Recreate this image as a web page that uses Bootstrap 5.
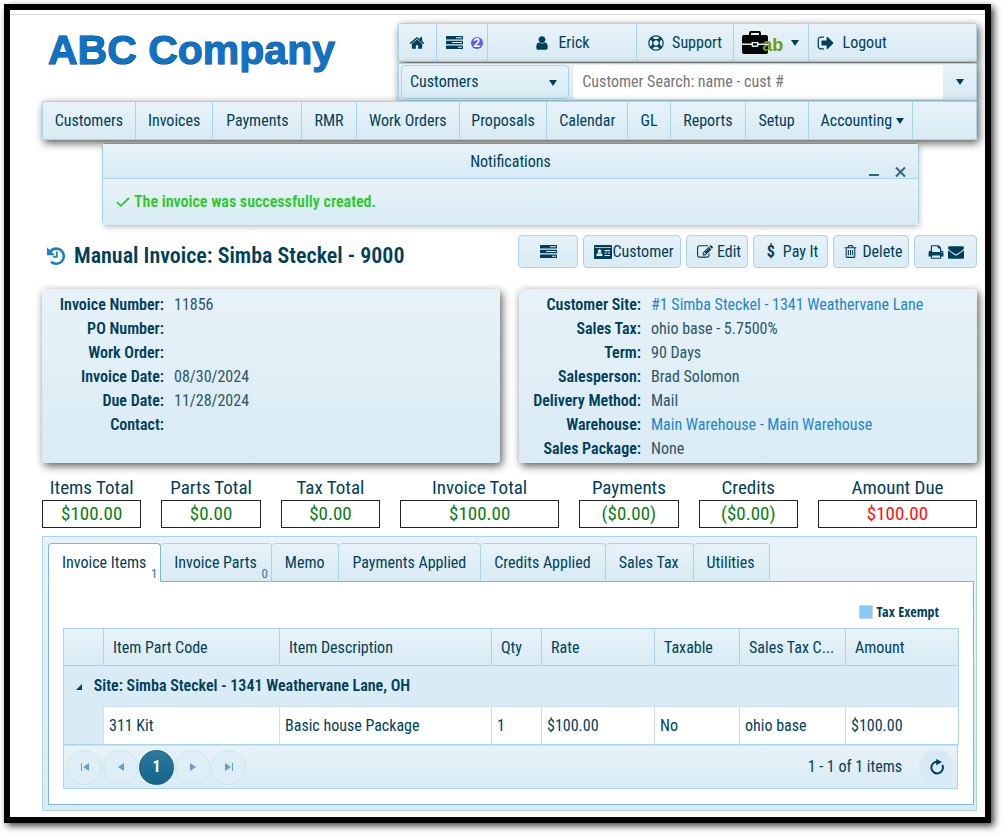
<!DOCTYPE html>
<html lang="en">
<head>
<meta charset="utf-8">
<meta name="viewport" content="width=device-width, initial-scale=1">
<title>Manual Invoice: Simba Steckel - 9000</title>
<link href="https://cdn.jsdelivr.net/npm/bootstrap@5.3.0/dist/css/bootstrap.min.css" rel="stylesheet">
<script src="https://cdn.jsdelivr.net/npm/bootstrap@5.3.0/dist/js/bootstrap.bundle.min.js"></script>
<style>
  :root { --ink:#003f59; --line:#a9d5e6; --line-dark:#7bb9d3; --pale:#e7f2f8; --mid:#d9ebf4; }
  body { font-family:"Roboto Condensed","Liberation Sans",sans-serif; font-size:16px; line-height:24px; color:var(--ink); }
  a { color:inherit; text-decoration:none; }
  svg { fill:currentColor; flex:none; }
  .frame { border:6px solid #000; box-shadow:3px 3px 7px rgba(0,0,0,.75); margin:4px 13px 12px 4px; }
  .page-body { border-top:1px solid #dcdcdc; padding:8px 8px 6px 32px; margin-top:4px; }
  .grad { background:linear-gradient(var(--pale),var(--mid)); }
  .lift { box-shadow:2px 3px 8px rgba(0,0,0,.65); }
  .bar { border:1px solid var(--line); border-radius:2px; }
  .head-grid { display:grid; grid-template-columns:minmax(0,356fr) minmax(0,579fr); }
  .logo { font:bold 41px/46px "Liberation Sans",sans-serif; color:#0b74ca; -webkit-text-stroke:1px #123a60; paint-order:stroke fill; margin:4px 0 0 6px; }
  .cells { display:grid; }
  .cells > * { display:flex; align-items:center; justify-content:center; gap:8px; color:var(--ink); white-space:nowrap; border-right:1px solid var(--line); }
  .cells > *:last-child { border-right:0; }
  .user-cells { height:39px; grid-template-columns:38fr 51fr 150fr 97fr 75fr 168fr; }
  .nav-cells { height:39px; grid-template-columns:93fr 78fr 89fr 55fr 103fr 88fr 81fr 43fr 75fr 63fr 105fr 63fr; }
  .count { background:#5a5cf5; color:#fff; border-radius:50%; font:bold 12px/12px "Roboto",sans-serif; width:12px; height:12px; text-align:center; }
  .ab { position:relative; color:#6f9c0b; font:bold 18px/18px "Liberation Sans",sans-serif; margin-left:-6px; }
  .search-row { display:grid; grid-template-columns:minmax(0,168fr) minmax(0,373fr) 33px; padding:1px 0 1px 2px; height:38px; margin-top:1px; }
  .search-row select { appearance:none; border:1px solid var(--line); border-radius:4px; color:var(--ink); padding:0 8px; width:100%; height:100%; }
  .search-row input { border:0; padding:0 9px; margin-left:4px; border-radius:4px 0 0 4px; color:var(--ink); min-width:0; }
  .search-row input::placeholder { color:#75767a; opacity:1; }
  .search-row button { border:0; color:var(--ink); padding:0; }
  .caret { width:0; height:0; border:4px solid transparent; border-top:6px solid var(--ink); border-bottom:0; flex:none; }
  .select-caret { position:absolute; right:12px; top:15px; pointer-events:none; }
  .notice { margin:3px 58px 0 60px; border-radius:4px; border:1px solid var(--line); box-shadow:1px 2px 5px rgba(0,0,0,.2); }
  .notice-head { height:35px; padding-top:6px; border-bottom:1px solid var(--line); text-align:center; position:relative; }
  .notice-tools { position:absolute; right:12px; bottom:0; }
  .notice-tools button { border:0; background:none; padding:0; display:block; height:12px; color:#33657b; }
  .notice-text { height:46px; padding:0 13px; color:#2bc92b; font-weight:600; }
  .title-row { margin:9px 0 17px; }
  .title-text { padding-top:5px; }
  h1 { font-size:22px; line-height:32px; font-weight:600; margin:0; }
  .tool { border:1px solid var(--line); border-radius:4px; color:var(--ink); height:33px; padding:0; display:flex; align-items:center; justify-content:center; box-shadow:inset 0 0 0 1px #dcedf5; }
  .tools { display:grid; gap:5px; grid-template-columns:60px 98px 62px 75px 76px 63px; }
  .info-grid { display:grid; grid-template-columns:minmax(0,1fr) minmax(0,1fr); gap:19px; margin-bottom:13px; }
  .info { border-radius:4px; height:174px; padding-top:4px; }
  .info dl { display:grid; grid-template-columns:122px 1fr; column-gap:10px; margin:0; }
  .info dt { text-align:right; font-weight:600; }
  .info dd { margin:0; color:#2c5568; }
  .info dd a { color:#1a86cc; }
  .totals { display:grid; grid-template-columns:5fr 5fr 5fr 8fr 5fr 5fr 8fr; gap:20px; text-align:center; font-size:19px; margin-bottom:8px; }
  .totals output { display:block; border:1px solid #222; background:#fff; color:#0b7d12; line-height:26px; }
  .totals label { display:block; line-height:24px; }
  .totals output.due { color:#f11; }
  .panel { border:1px solid var(--line); padding:6px 2px 5px 5px; background:linear-gradient(var(--pale),var(--mid)); }
  .tabs { height:39px; margin-bottom:-1px; position:relative; }
  .tabs button { border:1px solid var(--line); border-left-width:0; border-bottom-color:var(--line-dark); border-radius:4px 4px 0 0; color:var(--ink); padding:0 14px 0 13px; position:relative; white-space:nowrap; }
  .tabs button.active { background:#fff; border:1px solid var(--line-dark); border-bottom-color:#fff; }
  .tabs small { position:absolute; right:3px; bottom:0; font-size:13px; line-height:15px; color:#3a7692; }
  .pane { border:1px solid var(--line-dark); background:#fff; padding:18px 15px 15px 14px; }
  .legend-row { font:bold 14px/24px "Open Sans Condensed","Roboto Condensed",sans-serif; gap:4px; padding-right:19px; }
  .swatch { width:14px; height:14px; background:#88cbf8; border:1px solid #c8d2d8; }
  .items { table-layout:fixed; width:100%; border-collapse:collapse; border:1px solid var(--line); margin:4px 0 0; }
  .items th { height:37px; padding:2px 9px 0; font-weight:400; border-left:1px solid var(--line); border-bottom:1px solid var(--line); overflow:hidden; white-space:nowrap; }
  .items thead tr { background:linear-gradient(var(--pale),var(--mid)); }
  .items .site { height:41px; background:var(--mid); font-weight:600; padding:0 12px; border:0; }
  .items td { height:38px; padding:0 5px; border-left:1px solid #c9e3ee; border-top:1px solid #c9e3ee; }
  .items td.gutter { background:var(--mid); border:0; }
  .pager { border:1px solid var(--line); border-top-color:#c9e3ee; height:44px; padding:0 3px; gap:1px; }
  .pager button { width:35px; height:35px; border-radius:50%; border:1px solid #cde4ef; background:#deeef6; color:#6f9db1; padding:0; display:flex; align-items:center; justify-content:center; }
  .pager button.current { background:linear-gradient(#2c7a9b,#14658a); border-color:#156488; color:#fff; font-weight:700; }
  .pager button.reload { color:var(--ink); background:#d7eaf3; border:0; }
</style>
</head>
<body>
<svg width="0" height="0" class="position-absolute" aria-hidden="true">
  <symbol id="i-home" viewBox="0 0 1792 1792"><path d="M1472 992v480q0 26-19 45t-45 19h-384v-384h-256v384h-384q-26 0-45-19t-19-45v-480q0-1 .5-3t.5-3l575-474 575 474q1 2 1 6zm223-69l-62 74q-8 9-21 11h-3q-13 0-21-7l-692-577-692 577q-12 8-24 7-13-2-21-11l-62-74q-8-10-7-23.5t11-21.5l719-599q32-26 76-26t76 26l244 204v-195q0-14 9-23t23-9h192q14 0 23 9t9 23v408l219 182q10 8 11 21.5t-7 23.5z"/></symbol>
  <symbol id="i-user" viewBox="0 0 1792 1792"><path d="M1536 1399q0 109-62.5 187t-150.5 78h-854q-88 0-150.5-78t-62.5-187q0-85 8.5-160.5t31.5-152 58.5-131 94-89 134.5-34.5q131 128 313 128t313-128q76 0 134.500 34.500t94 89 58.500 131 31.500 152 8.500 160.500zm-256-887q0 159-112.500 271.500t-271.500 112.500-271.500-112.500-112.500-271.500 112.500-271.500 271.500-112.500 271.500 112.500 112.500 271.500z"/></symbol>
  <symbol id="i-tasks" viewBox="0 0 17 13"><path fill-rule="evenodd" d="M.5 0h16q.5 0 .5.500v2.500q0 .5-.5.500H.5Q0 3.500 0 3V.5Q0 0 .5 0zM10 1.200v1h6v-1zM.5 4.700h16q.5 0 .5.500v2.500q0 .5-.5.500H.5Q0 8.200 0 7.700V5.200q0-.5.500-.5zM6 6v1h10V6zM.5 9.400h16q.5 0 .5.500v2.500q0 .5-.5.500H.5q-.5 0-.5-.5V9.900q0-.5.500-.5zM12 10.700v1h4v-1z"/></symbol>
  <symbol id="i-ring" viewBox="0 0 16 16"><circle cx="8" cy="8" r="7.200" fill="none" stroke="currentColor" stroke-width="1.200"/><circle cx="8" cy="8" r="3.300" fill="none" stroke="currentColor" stroke-width="1.200"/><path d="M2.300 3.900L3.900 2.300 6.600 5 5 6.600zM12.100 2.300l1.600 1.600L11 6.600 9.400 5zM13.700 12.100l-1.600 1.600L9.400 11 11 9.400zM3.900 13.700l-1.600-1.600L5 9.400 6.600 11z" stroke="currentColor" stroke-width="1"/></symbol>
  <symbol id="i-out" viewBox="0 0 1792 1792"><path d="M704 1440q0 4 1 20t.5 26.500-3 23.500-10 19.500-20.500 6.500h-320q-119 0-203.500-84.500t-84.500-203.500v-704q0-119 84.500-203.500t203.500-84.500h320q13 0 22.500 9.500t9.500 22.500q0 4 1 20t.5 26.500-3 23.500-10 19.500-20.500 6.500h-320q-66 0-113 47t-47 113v704q0 66 47 113t113 47h312l11.500 1 11.500 3 8 5.500 7 9 2 13.500zm928-544q0 26-19 45l-544 544q-19 19-45 19t-45-19-19-45v-288h-448q-26 0-45-19t-19-45v-384q0-26 19-45t45-19h448v-288q0-26 19-45t45-19 45 19l544 544q19 19 19 45z"/></symbol>
  <symbol id="i-case" viewBox="0 0 26 23"><path fill-rule="evenodd" d="M7 4V2q0-2 2-2h8q2 0 2 2v2h5q2 0 2 2v6.500h-9.500V11h-7v1.500H0V6q0-2 2-2zM9 4h8V2H9zM0 14h9.500v.5q0 1.500 1.500 1.500h4q1.500 0 1.500-1.500V14H26v7q0 2-2 2H2q-2 0-2-2zM11 12.200h4v2.300h-4z"/></symbol>
  <symbol id="i-card" viewBox="0 0 18 14"><path fill-rule="evenodd" d="M1 0h16q1 0 1 1v12q0 1-1 1H1q-1 0-1-1V1q0-1 1-1zM1 2v.8h16V2zM5.500 4.300a1.700 2 0 1 0 .1 0zM2.500 11h6V9.500Q8 8.300 7 8 5.500 9 4 8q-1.300.3-1.500 1.500zM10.500 5v1.200H16V5zM10.500 7.500v1H13v-1zM14 7.500v1h2v-1zM10.500 10v1H16v-1z"/></symbol>
  <symbol id="i-edit" viewBox="0 0 1792 1792"><path d="M888 1184l116-116-152-152-116 116v56h96v96h56zm440-720q-16-16-33 1l-350 350q-17 17-1 33t33-1l350-350q17-17 1-33zm80 594v190q0 119-84.500 203.500t-203.500 84.500h-832q-119 0-203.500-84.500t-84.500-203.500v-832q0-119 84.500-203.500t203.500-84.500h832q63 0 117 25 15 7 18 23 3 17-9 29l-49 49q-14 14-32 8-23-6-45-6h-832q-66 0-113 47t-47 113v832q0 66 47 113t113 47h832q66 0 113-47t47-113v-126q0-13 9-22l64-64q15-15 35-7t20 29zm-96-738l288 288-672 672h-288v-288zm444 132l-92 92-288-288 92-92q28-28 68-28t68 28l152 152q28 28 28 68t-28 68z"/></symbol>
  <symbol id="i-trash" viewBox="0 0 1792 1792"><path d="M704 736v576q0 14-9 23t-23 9h-64q-14 0-23-9t-9-23v-576q0-14 9-23t23-9h64q14 0 23 9t9 23zm256 0v576q0 14-9 23t-23 9h-64q-14 0-23-9t-9-23v-576q0-14 9-23t23-9h64q14 0 23 9t9 23zm256 0v576q0 14-9 23t-23 9h-64q-14 0-23-9t-9-23v-576q0-14 9-23t23-9h64q14 0 23 9t9 23zm128 724v-948h-896v948q0 22 7 40.500t14.500 27 10.500 8.500h832q3 0 10.500-8.500t14.500-27 7-40.500zm-672-1076h448l-48-117q-7-9-17-11h-317q-10 2-17 11zm928 32v64q0 14-9 23t-23 9h-96v948q0 83-47 143.500t-113 60.500h-832q-66 0-113-58.500t-47-141.500v-952h-96q-14 0-23-9t-9-23v-64q0-14 9-23t23-9h309l70-167q15-37 54-63t79-26h320q40 0 79 26t54 63l70 167h309q14 0 23 9t9 23z"/></symbol>
  <symbol id="i-print" viewBox="0 0 1792 1792"><path d="M448 1536h896v-256h-896v256zm0-640h896v-384h-160q-40 0-68-28t-28-68v-160h-640v640zm1152 64q0-26-19-45t-45-19-45 19-19 45 19 45 45 19 45-19 19-45zm128 0v416q0 13-9.500 22.500t-22.500 9.500h-224v160q0 40-28 68t-68 28h-960q-40 0-68-28t-28-68v-160h-224q-13 0-22.500-9.500t-9.500-22.500v-416q0-79 56.500-135.500t135.500-56.500h64v-544q0-40 28-68t68-28h672q40 0 88 20t76 48l152 152q28 28 48 76t20 88v256h64q79 0 135.500 56.500t56.500 135.500z"/></symbol>
  <symbol id="i-mail" viewBox="0 0 1792 1792"><path d="M1792 710v794q0 66-47 113t-113 47h-1472q-66 0-113-47t-47-113v-794q44 49 101 87 362 246 497 345 57 42 92.500 65.500t94.500 48 110 24.500h2q51 0 110-24.500t94.500-48 92.500-65.500q170-123 498-345 57-39 100-87zm0-294q0 79-49 151t-122 123q-376 261-468 325-10 7-42.500 31t-54 38.500-52 32.500-57.500 27-50 9h-2q-23 0-50-9t-57.500-27-52-32.500-54-38.500-42.500-31q-91-64-262-182.500t-205-142.500q-62-42-117-115.500t-55-136.500q0-78 41.500-130t118.500-52h1472q65 0 112.500 47t47.500 113z"/></symbol>
  <symbol id="i-history" viewBox="0 0 20 20"><path d="M4.200 5.600A7.600 7.600 0 1 1 5 15.700" fill="none" stroke="currentColor" stroke-width="2.600"/><path d="M1 1.200v8h8z"/><path d="M10.800 5.500v5.300H7.200" fill="none" stroke="currentColor" stroke-width="1.800"/></symbol>
  <symbol id="i-check" viewBox="0 0 14 10"><path d="M1 5.200l3.800 3.600L13 1" fill="none" stroke="currentColor" stroke-width="1.800"/></symbol>
  <symbol id="i-reload" viewBox="0 0 16 16"><path d="M8.500 2.800A5.800 5.800 0 1 0 13.300 6" fill="none" stroke="currentColor" stroke-width="2"/><path d="M7.200 0v6.200L13 3z"/></symbol>
</svg>

<div class="frame">
 <div class="page-body">
  <header class="head-grid">
    <div class="logo text-nowrap">ABC Company</div>
    <div>
      <nav class="cells user-cells grad bar lift" aria-label="Account">
        <a href="#" aria-label="Home"><svg width="16" height="16"><use href="#i-home"/></svg></a>
        <a href="#" class="justify-content-end pe-1"><svg width="17" height="13"><use href="#i-tasks"/></svg><span class="count">2</span></a>
        <a href="#"><svg width="16" height="16"><use href="#i-user"/></svg>Erick</a>
        <a href="#"><svg width="16" height="16"><use href="#i-ring"/></svg>Support</a>
        <a href="#" aria-label="Work tools"><span class="d-flex align-items-end"><svg width="26" height="23" color="#000"><use href="#i-case"/></svg><b class="ab">ab</b></span><span class="caret"></span></a>
        <a href="#" class="justify-content-start ps-2"><svg width="18" height="18"><use href="#i-out"/></svg>Logout</a>
      </nav>
      <form class="search-row grad bar lift">
        <div class="position-relative">
          <select class="grad" aria-label="Search in"><option>Customers</option></select>
          <span class="caret select-caret"></span>
        </div>
        <input type="text" aria-label="Customer search" placeholder="Customer Search: name - cust #">
        <button type="button" class="grad d-flex align-items-center justify-content-center" aria-label="Show list"><span class="caret"></span></button>
      </form>
    </div>
  </header>

  <nav class="cells nav-cells grad bar lift position-relative" aria-label="Main">
    <a href="#">Customers</a><a href="#">Invoices</a><a href="#">Payments</a><a href="#">RMR</a><a href="#">Work Orders</a><a href="#">Proposals</a><a href="#">Calendar</a><a href="#">GL</a><a href="#">Reports</a><a href="#">Setup</a><a href="#" class="gap-1 ps-1">Accounting<span class="caret"></span></a><span></span>
  </nav>

  <section class="notice">
    <div class="notice-head grad">Notifications
      <div class="notice-tools d-flex gap-3">
        <button type="button" aria-label="Minimize"><svg width="10" height="10" class="d-block"><path d="M0 7h10v2H0z"/></svg></button>
        <button type="button" aria-label="Close"><svg width="11" height="10" class="d-block"><path d="M1 .5l9 9M10 .5l-9 9" stroke="currentColor" stroke-width="2"/></svg></button>
      </div>
    </div>
    <div class="notice-text grad d-flex align-items-center gap-1"><svg width="14" height="10"><use href="#i-check"/></svg>The invoice was successfully created.</div>
  </section>

  <div class="title-row d-flex justify-content-between">
    <div class="title-text d-flex align-items-center gap-2 ps-1">
      <svg width="20" height="20" color="#1a80c4"><use href="#i-history"/></svg>
      <h1>Manual Invoice: Simba Steckel - 9000</h1>
    </div>
    <div class="tools">
      <button type="button" class="tool grad" aria-label="Tasks"><svg width="17" height="13"><use href="#i-tasks"/></svg></button>
      <button type="button" class="tool grad ps-1"><svg width="18" height="14"><use href="#i-card"/></svg>Customer</button>
      <button type="button" class="tool grad ps-1 gap-1"><svg width="16" height="16"><use href="#i-edit"/></svg>Edit</button>
      <button type="button" class="tool grad ps-1 gap-2"><b>$</b>Pay It</button>
      <button type="button" class="tool grad ps-1 gap-1"><svg width="15" height="15"><use href="#i-trash"/></svg>Delete</button>
      <button type="button" class="tool grad gap-1" aria-label="Print and mail"><svg width="16" height="16"><use href="#i-print"/></svg><svg width="16" height="16"><use href="#i-mail"/></svg></button>
    </div>
  </div>

  <div class="info-grid">
    <section class="info grad lift">
      <dl>
        <dt>Invoice Number:</dt><dd>11856</dd>
        <dt>PO Number:</dt><dd></dd>
        <dt>Work Order:</dt><dd></dd>
        <dt>Invoice Date:</dt><dd>08/30/2024</dd>
        <dt>Due Date:</dt><dd>11/28/2024</dd>
        <dt>Contact:</dt><dd></dd>
      </dl>
    </section>
    <section class="info grad lift">
      <dl>
        <dt>Customer Site:</dt><dd><a href="#">#1 Simba Steckel - 1341 Weathervane Lane</a></dd>
        <dt>Sales Tax:</dt><dd>ohio base - 5.7500%</dd>
        <dt>Term:</dt><dd>90 Days</dd>
        <dt>Salesperson:</dt><dd>Brad Solomon</dd>
        <dt>Delivery Method:</dt><dd>Mail</dd>
        <dt>Warehouse:</dt><dd><a href="#">Main Warehouse - Main Warehouse</a></dd>
        <dt>Sales Package:</dt><dd>None</dd>
      </dl>
    </section>
  </div>

  <section class="totals">
    <div><label for="t1">Items Total</label><output id="t1">$100.00</output></div>
    <div><label for="t2">Parts Total</label><output id="t2">$0.00</output></div>
    <div><label for="t3">Tax Total</label><output id="t3">$0.00</output></div>
    <div><label for="t4">Invoice Total</label><output id="t4">$100.00</output></div>
    <div><label for="t5">Payments</label><output id="t5">($0.00)</output></div>
    <div><label for="t6">Credits</label><output id="t6">($0.00)</output></div>
    <div><label for="t7">Amount Due</label><output id="t7" class="due">$100.00</output></div>
  </section>

  <section class="panel">
    <div class="tabs d-flex" role="tablist">
      <button type="button" role="tab" class="active">Invoice Items<small>1</small></button>
      <button type="button" role="tab" class="grad">Invoice Parts<small>0</small></button>
      <button type="button" role="tab" class="grad">Memo</button>
      <button type="button" role="tab" class="grad">Payments Applied</button>
      <button type="button" role="tab" class="grad">Credits Applied</button>
      <button type="button" role="tab" class="grad">Sales Tax</button>
      <button type="button" role="tab" class="grad">Utilities</button>
    </div>
    <div class="pane">
      <div class="legend-row d-flex justify-content-end align-items-center"><span class="swatch"></span>Tax Exempt</div>
      <table class="items">
        <colgroup><col width="40"><col width="176"><col width="212"><col width="50"><col width="113"><col width="85"><col width="106"><col width="113"></colgroup>
        <thead><tr><th></th><th>Item Part Code</th><th>Item Description</th><th>Qty</th><th>Rate</th><th>Taxable</th><th>Sales Tax C...</th><th>Amount</th></tr></thead>
        <tbody>
          <tr><td colspan="8" class="site"><svg width="6" height="6" class="me-2"><path d="M6 0v6H0z"/></svg> Site: Simba Steckel - 1341 Weathervane Lane, OH</td></tr>
          <tr><td class="gutter"></td><td>311 Kit</td><td>Basic house Package</td><td>1</td><td>$100.00</td><td>No</td><td>ohio base</td><td>$100.00</td></tr>
        </tbody>
      </table>
      <div class="pager grad d-flex align-items-center">
        <button type="button" aria-label="First page"><svg width="8" height="8"><path d="M0 0h1v8H0zM8 0v8L2 4z"/></svg></button>
        <button type="button" aria-label="Previous page"><svg width="8" height="8"><path d="M7 0v8L1 4z"/></svg></button>
        <button type="button" class="current">1</button>
        <button type="button" aria-label="Next page"><svg width="8" height="8"><path d="M1 0v8l6-4z"/></svg></button>
        <button type="button" aria-label="Last page"><svg width="8" height="8"><path d="M7 0h1v8H7zM0 0v8l6-4z"/></svg></button>
        <span class="ms-auto me-3">1 - 1 of 1 items</span>
        <button type="button" class="reload" aria-label="Refresh"><svg width="16" height="16"><use href="#i-reload"/></svg></button>
      </div>
    </div>
  </section>
 </div>
</div>
</body>
</html>
